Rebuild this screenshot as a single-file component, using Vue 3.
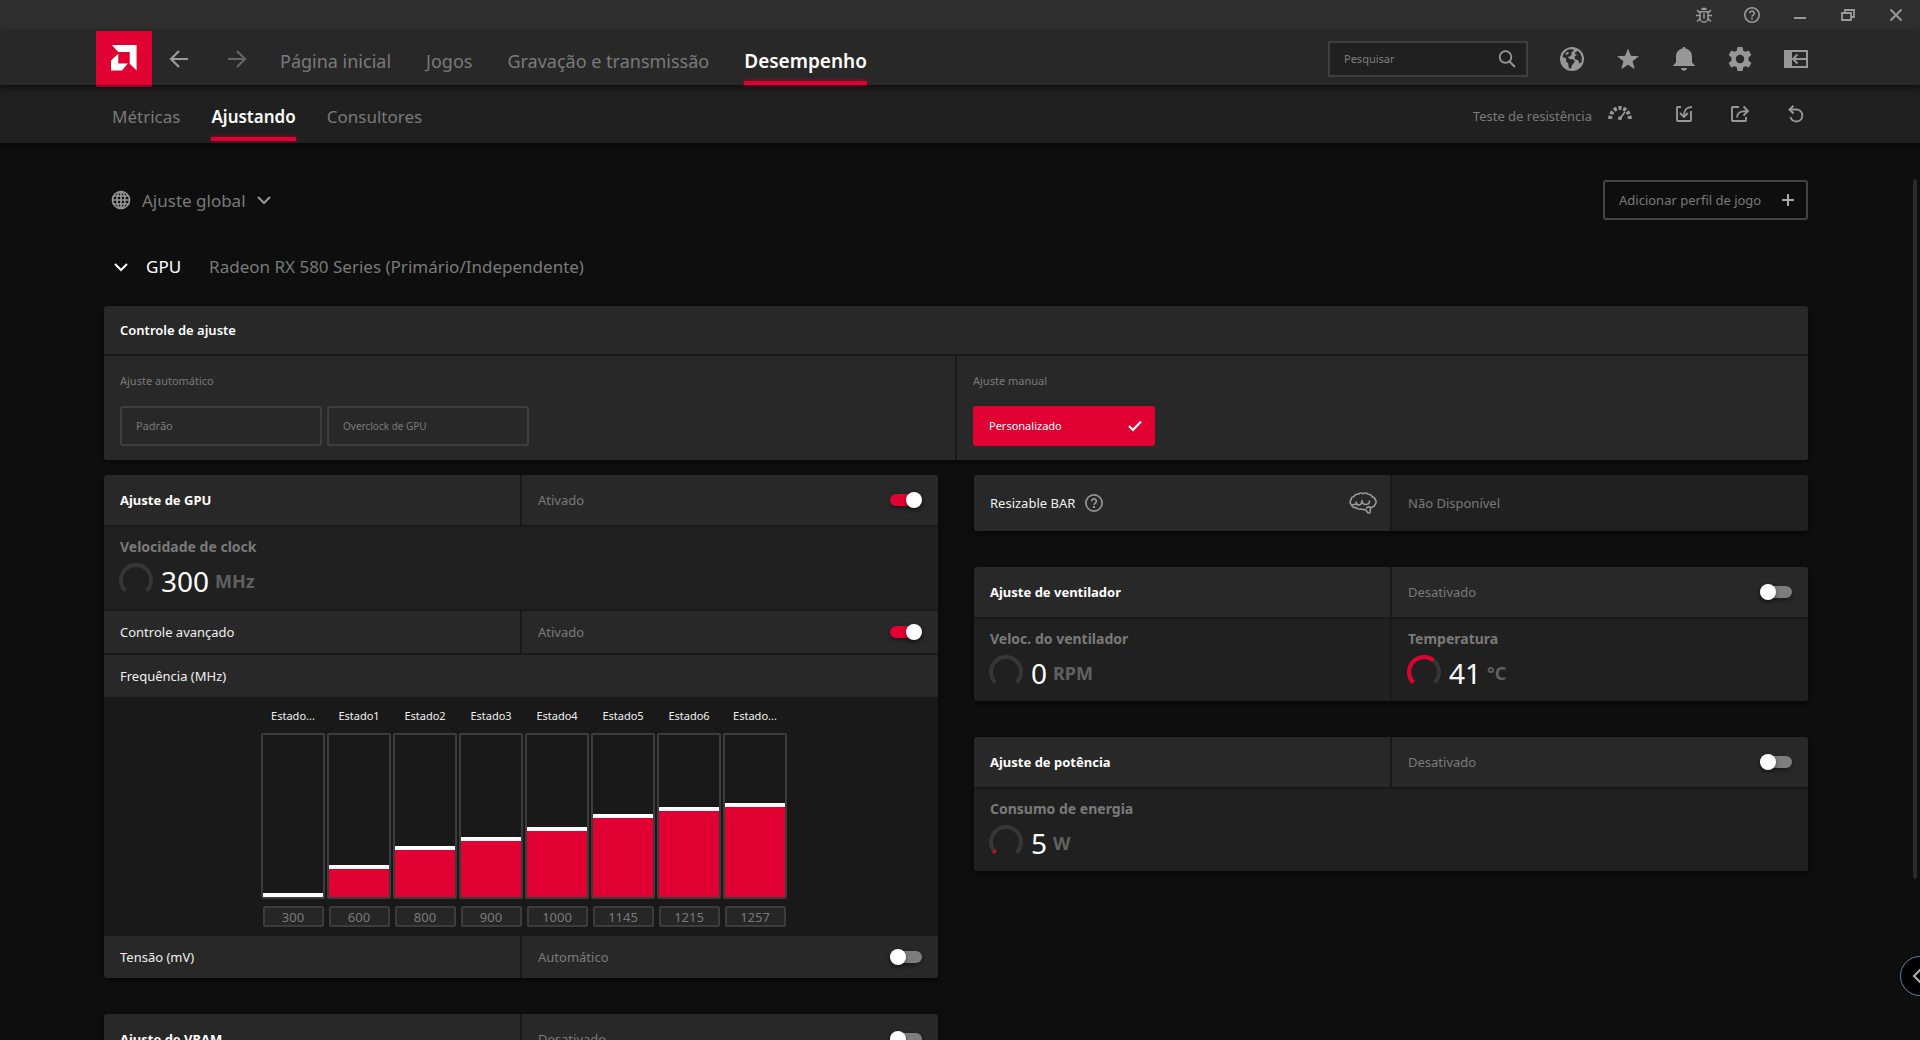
<script setup>
import { ref } from 'vue'

const mainTabs = ['Página inicial', 'Jogos', 'Gravação e transmissão', 'Desempenho']
const subTabs = ['Métricas', 'Ajustando', 'Consultores']
const activeMain = ref('Desempenho')
const activeSub = ref('Ajustando')

const minClock = 300
const maxClock = 1980
const states = ref([
  { label: 'Estado...', value: 300 },
  { label: 'Estado1', value: 600 },
  { label: 'Estado2', value: 800 },
  { label: 'Estado3', value: 900 },
  { label: 'Estado4', value: 1000 },
  { label: 'Estado5', value: 1145 },
  { label: 'Estado6', value: 1215 },
  { label: 'Estado...', value: 1257 }
])
const ratio = (v) => (v - minClock) / (maxClock - minClock)

const gpuOn = ref(true)
const advancedOn = ref(true)
const voltageOn = ref(false)
const vramOn = ref(false)
const fanOn = ref(false)
const powerOn = ref(false)
</script>

<template>
  <div class="app">
    <div class="titlebar">
      <button class="win-btn" aria-label="Relatar erro">
        <svg width="16" height="16" viewBox="0 0 16 16" fill="none" stroke="currentColor" stroke-width="1.6">
          <path d="M5 3a3 2.6 0 0 1 6 0z" fill="currentColor" stroke="none" />
          <path d="M4 4.8h8v6.4a4 4 0 0 1-8 0zM8 6.500v5M4 8.500H0M12 8.500h4M4 5.800L1 3.200M12 5.800l3-2.600M4.200 11.500L1 14.500M11.800 11.500L15 14.500" />
        </svg>
      </button>
      <button class="win-btn" aria-label="Ajuda">
        <svg width="16" height="16" viewBox="0 0 16 16" fill="none" stroke="currentColor" stroke-width="1.600">
          <circle cx="8" cy="8" r="7.200" />
          <path d="M5.800 6.300a2.200 2.200 0 1 1 3.400 1.800C8.300 8.700 8 9 8 9.800" />
          <path d="M8 10.800v1.800" stroke-width="1.800" />
        </svg>
      </button>
      <button class="win-btn" aria-label="Minimizar">
        <svg width="16" height="16" viewBox="0 0 16 16"><path d="M2 10h12v2H2z" fill="currentColor" /></svg>
      </button>
      <button class="win-btn" aria-label="Restaurar">
        <svg width="16" height="16" viewBox="0 0 16 16" fill="none" stroke="currentColor" stroke-width="1.800">
          <path d="M2 6h9v7H2zM5 6V3h9v7h-3" />
        </svg>
      </button>
      <button class="win-btn" aria-label="Fechar">
        <svg width="16" height="16" viewBox="0 0 16 16" fill="none" stroke="currentColor" stroke-width="1.800"><path d="M2.500 2.500l11 11M13.500 2.500l-11 11" /></svg>
      </button>
    </div>

    <header class="header">
      <div class="logo">
        <svg width="26" height="26" viewBox="0 0 25 25" fill="#fff">
          <path d="M.7 0H24.600V24.600L18 18V6.700H7z" />
          <path d="M7 8.500V17.700H16.200L10.500 24.600H0V15z" />
        </svg>
      </div>
      <div class="history">
        <button class="nav-arrow" aria-label="Voltar">
          <svg width="20" height="20" viewBox="0 0 20 20" fill="none" stroke="currentColor" stroke-width="2.200"><path d="M19 10H2.500M10 2L2 10l8 8" /></svg>
        </button>
        <button class="nav-arrow dim" aria-label="Avançar">
          <svg width="20" height="20" viewBox="0 0 20 20" fill="none" stroke="currentColor" stroke-width="2.200"><path d="M1 10h16.500M10 2l8 8-8 8" /></svg>
        </button>
      </div>
      <nav class="tabs main-tabs">
        <a v-for="t in mainTabs" :key="t" href="#" :class="{ active: t === activeMain }" @click.prevent="activeMain = t">{{ t }}</a>
      </nav>
      <div class="search">
        <input type="text" placeholder="Pesquisar" aria-label="Pesquisar" />
        <svg width="18" height="18" viewBox="0 0 18 18" fill="none" stroke="currentColor" stroke-width="1.800"><circle cx="7.500" cy="7" r="5.800" /><path d="M11.500 11.500L17 17" /></svg>
      </div>
      <div class="icons">
        <button class="icon-btn" aria-label="Navegador">
          <svg width="24" height="24" viewBox="0 0 24 24">
            <circle cx="12" cy="12" r="12" fill="currentColor" />
            <path d="M4 6l4-3.500 4.500-.3 1.300 1.600-2.800 2 .8 1.700-2.300 2.200H7.800l1.500 2.300 3.700.3 2 2.200-2.600 3-1.600 4.300-2-.8-.6-4.400-2.200-2.200.3-2.800L3 10.200 2.600 9z" fill="#282828" />
            <path d="M15 5.500l3-1.700 2.600 3.300 1.300 3.700-.3 4.400-2.200 1.300-1.400-3.400-2.800-.7-.7-3 2.800-1.700-2.300-.4z" fill="#282828" />
            <path d="M5.500 6.300l2.200-1.200 1.500.8-2 1.700-1.400.4z" fill="currentColor" />
          </svg>
        </button>
        <button class="icon-btn" aria-label="Favoritos">
          <svg width="24" height="24" viewBox="0 0 24 24" fill="currentColor"><path d="M12 1.500l2.800 7.300 8.200.5-6.400 4.900 2.200 8L12 17.800l-6.800 4.400 2.200-8L1 9.300l8.200-.5z" /></svg>
        </button>
        <button class="icon-btn" aria-label="Notificações">
          <svg width="24" height="24" viewBox="0 0 24 24" fill="currentColor"><path d="M12 0c1 0 1.500.6 1.600 1.600C17.500 2.600 20 5.500 20 9.500v6l3.500 3.500H.5L4 15.500v-6c0-4 2.500-6.900 6.400-7.900C10.500.6 11 0 12 0zM9 21h6c-.4 1.800-1.500 2.700-3 2.700S9.400 22.800 9 21z" /></svg>
        </button>
        <button class="icon-btn" aria-label="Configurações">
          <svg width="24" height="24" viewBox="0 0 24 24" fill="currentColor" fill-rule="evenodd"><path d="M9.500 0h5l.8 3.700 1.900 1.100 3.600-1.200 2.500 4.300-2.800 2.500v3.200l2.800 2.500-2.500 4.300-3.600-1.200-1.900 1.100-.8 3.700h-5l-.8-3.700-1.900-1.100-3.600 1.200L.7 16.100l2.800-2.500v-3.200L.7 7.900l2.500-4.300 3.600 1.200 1.900-1.100zM12 7.800a4.200 4.200 0 1 0 0 8.400 4.200 4.200 0 0 0 0-8.400z" /></svg>
        </button>
        <button class="icon-btn" aria-label="Recolher painel">
          <svg width="24" height="24" viewBox="0 0 24 24"><path d="M1 4h22v16H1z" fill="none" stroke="currentColor" stroke-width="2" /><path d="M0 3h8v18H0z" fill="currentColor" /><path d="M22 12H9.500M13.500 7.500L9 12l4.500 4.500" fill="none" stroke="currentColor" stroke-width="2" /></svg>
        </button>
      </div>
    </header>

    <div class="subnav">
      <nav class="tabs sub-tabs">
        <a v-for="t in subTabs" :key="t" href="#" :class="{ active: t === activeSub }" @click.prevent="activeSub = t">{{ t }}</a>
      </nav>
      <button class="stress">
        <span>Teste de resistência</span>
        <svg width="24" height="16" viewBox="0 0 24 16" fill="none" stroke="currentColor">
          <path d="M2.200 14A9.800 11 0 0 1 21.800 14" pathLength="306" stroke-width="4" stroke-dasharray="30 16" />
          <path d="M12 13.500l5-6.500" stroke-width="1.800" /><circle cx="12" cy="13.200" r="2" fill="currentColor" stroke="none" />
        </svg>
      </button>
      <div class="icons sub-icons">
        <button class="icon-btn" aria-label="Importar">
          <svg width="18" height="18" viewBox="0 0 18 18" fill="none" stroke="currentColor" stroke-width="1.900"><path d="M6 2H2.800Q2 2 2 2.800V15.200Q2 16 2.800 16H15.200Q16 16 16 15.200V6M17 2C12 2 9 4 9 11.500M5 8l4 4 4-4" /></svg>
        </button>
        <button class="icon-btn" aria-label="Exportar">
          <svg width="20" height="18" viewBox="0 0 20 18" fill="none" stroke="currentColor" stroke-width="1.900"><path d="M9 2H2.800Q2 2 2 2.800V15.200Q2 16 2.800 16H15.200Q16 16 16 15.200V12M7 12.500C7 8 9.500 6 17.500 6M13.500 1.500L18 6l-4.500 4.500" /></svg>
        </button>
        <button class="icon-btn" aria-label="Redefinir">
          <svg width="18" height="18" viewBox="0 0 18 18" fill="none" stroke="currentColor" stroke-width="1.900"><path d="M2.500 4.500H9.500A6 6 0 1 1 3.500 12M6.500.8L2.500 4.500l4 4" /></svg>
        </button>
      </div>
    </div>

    <main class="main">
      <div class="content">
        <div class="profile-row">
          <button class="profile">
            <svg width="20" height="20" viewBox="0 0 20 20" fill="none" stroke="currentColor" stroke-width="1.700"><circle cx="10" cy="10" r="8.500" /><ellipse cx="10" cy="10" rx="4" ry="8.500" /><path d="M10 1.500v17M1.500 10h17M2.600 6h14.800M2.600 14h14.800" /></svg>
            <span>Ajuste global</span>
            <svg width="14" height="14" viewBox="0 0 14 14" fill="none" stroke="currentColor" stroke-width="2"><path d="M1 4l6 6 6-6" /></svg>
          </button>
          <button class="add-profile">
            Adicionar perfil de jogo
            <svg width="12" height="12" viewBox="0 0 12 12" fill="none" stroke="currentColor" stroke-width="2"><path d="M6 0v12M0 6h12" /></svg>
          </button>
        </div>

        <button class="gpu-row">
          <svg width="14" height="14" viewBox="0 0 14 14" fill="none" stroke="#fff" stroke-width="2"><path d="M1 4l6 6 6-6" /></svg>
          <span class="gpu">GPU</span>
          <span>Radeon RX 580 Series (Primário/Independente)</span>
        </button>

        <section class="card">
          <h2 class="cell control-title">Controle de ajuste</h2>
          <div class="split">
            <div class="cell control-cell">
              <h3>Ajuste automático</h3>
              <div class="options">
                <button class="option">Padrão</button>
                <button class="option small">Overclock de GPU</button>
              </div>
            </div>
            <div class="cell control-cell">
              <h3>Ajuste manual</h3>
              <div class="options">
                <button class="option selected">
                  Personalizado
                  <svg width="14" height="12" viewBox="0 0 14 12" fill="none" stroke="#fff" stroke-width="2.200"><path d="M1 6l4 4 8-8.500" /></svg>
                </button>
              </div>
            </div>
          </div>
        </section>

        <div class="columns">
          <div class="column">
            <section class="card">
              <div class="split head">
                <h2 class="cell">Ajuste de GPU</h2>
                <label class="cell state">Ativado<input v-model="gpuOn" type="checkbox" class="toggle" /></label>
              </div>
              <div class="cell metric">
                <h3>Velocidade de clock</h3>
                <div class="reading">
                  <svg width="34" height="30" viewBox="0 0 34 30" fill="none" stroke-width="4"><path class="track" d="M6.400 27.600A15 15 0 1 1 27.600 27.600" /></svg>
                  <span class="value">300</span><span class="unit">MHz</span>
                </div>
              </div>
              <div class="split row">
                <span class="cell">Controle avançado</span>
                <label class="cell state">Ativado<input v-model="advancedOn" type="checkbox" class="toggle" /></label>
              </div>
              <div class="cell row">Frequência (MHz)</div>
              <div class="chart">
                <div v-for="(s, i) in states" :key="i" class="bar">
                  <label :for="'clock' + i">{{ s.label }}</label>
                  <input
                    :id="'clock' + i"
                    v-model.number="s.value"
                    class="slider"
                    type="range"
                    :min="minClock"
                    :max="maxClock"
                    :style="{ '--ratio': ratio(s.value) }"
                  />
                  <input v-model.number="s.value" class="clock" type="text" :aria-label="s.label + ' MHz'" />
                </div>
              </div>
              <div class="split row tension">
                <span class="cell">Tensão (mV)</span>
                <label class="cell state">Automático<input v-model="voltageOn" type="checkbox" class="toggle" /></label>
              </div>
            </section>

            <section class="card">
              <div class="split head">
                <h2 class="cell">Ajuste de VRAM</h2>
                <label class="cell state">Desativado<input v-model="vramOn" type="checkbox" class="toggle" /></label>
              </div>
            </section>
          </div>

          <div class="column">
            <section class="card">
              <div class="split rebar">
                <div class="cell rebar-name">
                  Resizable BAR
                  <svg width="18" height="18" viewBox="0 0 18 18" fill="none" stroke="currentColor" stroke-width="1.700">
                    <circle cx="9" cy="9" r="8.100" />
                    <path d="M6.700 7.200a2.300 2.300 0 1 1 3.500 1.900C9.300 9.700 9 10 9 11" /><path d="M9 12v1.900" stroke-width="2" />
                  </svg>
                  <svg class="brain" width="28" height="22" viewBox="0 0 28 22" fill="none" stroke="currentColor" stroke-width="1.600" stroke-linejoin="round">
                    <path d="M9.500 2Q12 .2 14 1.700Q17 .2 19 2.200Q22 2 23 4.500Q26 5.500 26.500 8Q28 10.500 26 12.800Q24.500 15.500 21.500 15.500L21 21H19L16.500 17.500Q14 18 12.500 17Q9 18 7 15.500Q3.500 16 2.500 13Q0 10.500 2 8Q2 5 5 4.500Q6 2 9.500 2z" />
                    <path d="M3 13Q6 11.500 8.500 12.800Q13 13.500 13 8.500Q13.500 12.800 17 12.500Q20.500 12.500 20.500 8.500M8.500 12.500Q7 11.500 7 9.500M17.500 16.500Q18 14.500 21.500 15" />
                  </svg>
                </div>
                <div class="cell state">Não Disponível</div>
              </div>
            </section>

            <section class="card">
              <div class="split head">
                <h2 class="cell">Ajuste de ventilador</h2>
                <label class="cell state">Desativado<input v-model="fanOn" type="checkbox" class="toggle" /></label>
              </div>
              <div class="split">
                <div class="cell metric">
                  <h3>Veloc. do ventilador</h3>
                  <div class="reading">
                    <svg width="34" height="30" viewBox="0 0 34 30" fill="none" stroke-width="4"><path class="track" d="M6.400 27.600A15 15 0 1 1 27.600 27.600" /></svg>
                    <span class="value">0</span><span class="unit">RPM</span>
                  </div>
                </div>
                <div class="cell metric">
                  <h3>Temperatura</h3>
                  <div class="reading">
                    <svg width="34" height="30" viewBox="0 0 34 30" fill="none" stroke-width="4">
                      <path class="track" d="M6.400 27.600A15 15 0 1 1 27.600 27.600" />
                      <path class="level" d="M6.400 27.600A15 15 0 0 1 26.500 5.400" />
                    </svg>
                    <span class="value">41</span><span class="unit">°C</span>
                  </div>
                </div>
              </div>
            </section>

            <section class="card">
              <div class="split head">
                <h2 class="cell">Ajuste de potência</h2>
                <label class="cell state">Desativado<input v-model="powerOn" type="checkbox" class="toggle" /></label>
              </div>
              <div class="cell metric">
                <h3>Consumo de energia</h3>
                <div class="reading">
                  <svg width="34" height="30" viewBox="0 0 34 30" fill="none" stroke-width="4">
                    <path class="track" d="M6.400 27.600A15 15 0 1 1 27.600 27.600" />
                    <path class="level" d="M6.400 27.600A15 15 0 0 1 4.700 25.600" />
                  </svg>
                  <span class="value">5</span><span class="unit">W</span>
                </div>
              </div>
            </section>
          </div>
        </div>
      </div>
      <div class="scroll-thumb"></div>
    </main>

    <button class="drawer" aria-label="Abrir painel lateral">
      <svg width="12" height="16" viewBox="0 0 12 16" fill="none" stroke="#b0b0b0" stroke-width="2"><path d="M9 1L2 8l7 7" /></svg>
    </button>
  </div>
</template>

<style>
body {
  margin: 0;
  background: #0e0e0e;
}
</style>

<style scoped>
* {
  box-sizing: border-box;
}

.app {
  position: relative;
  display: flex;
  flex-direction: column;
  height: 100vh;
  overflow: hidden;
  background: #0e0e0e;
  color: #7a7a7a;
  font-family: "Noto Sans", "Open Sans", sans-serif;
  font-size: 13px;
  line-height: 18px;
}

button {
  padding: 0;
  border: 0;
  background: none;
  color: inherit;
  font: inherit;
}

h2,
h3 {
  margin: 0;
  font-size: 13px;
}

svg {
  display: block;
  flex: none;
}

/* Window chrome */
.titlebar {
  display: flex;
  justify-content: flex-end;
  flex: none;
  height: 31px;
  padding-bottom: 2px;
  background: #2f2f2f;
  color: #9a9a9a;
}

.win-btn {
  display: flex;
  align-items: center;
  justify-content: center;
  width: 48px;
}

.header {
  position: relative;
  z-index: 2;
  display: flex;
  align-items: center;
  flex: none;
  height: 54px;
  padding: 2px 112px 0 96px;
  background: #282828;
  box-shadow: 0 2px 6px rgba(0, 0, 0, 0.7);
}

.logo {
  display: flex;
  align-items: center;
  justify-content: center;
  align-self: flex-start;
  width: 56px;
  height: 56px;
  margin-top: -2px;
  border-bottom: 2px solid #8a0622;
  background: #e00031;
}

.history {
  display: flex;
  gap: 34px;
  margin-left: 15px;
}

.nav-arrow {
  display: flex;
  align-items: center;
  justify-content: center;
  width: 24px;
  height: 24px;
  color: #9a9a9a;
}

.nav-arrow.dim {
  color: #646464;
}

.tabs {
  display: flex;
  flex: 1;
}

/* Each tab keeps a 4px strip under its text for the marker */
.tabs a {
  display: grid;
  grid-template-rows: 1fr 4px;
  align-items: center;
  color: #7a7a7a;
  text-decoration: none;
  white-space: nowrap;
}

.tabs a::after {
  content: "";
  height: 4px;
}

.tabs a.active {
  color: #fff;
  font-weight: 600;
}

.tabs a.active::after {
  background: #e00031;
  box-shadow: 0 0 4px rgba(224, 0, 49, 0.6);
}

.main-tabs {
  align-self: stretch;
  gap: 35px;
  margin-left: 31px;
  font-size: 18px;
}

.main-tabs a {
  padding-top: 8px;
}

.main-tabs a.active {
  font-size: 19px;
}

.search {
  display: flex;
  align-items: center;
  width: 200px;
  height: 36px;
  padding: 0 10px 0 14px;
  border: 2px solid #3e3e3e;
  background: #202020;
  color: #9a9a9a;
}

.search input {
  flex: 1;
  min-width: 0;
  padding: 0;
  border: 0;
  outline: 0;
  background: none;
  color: #fff;
  font: inherit;
  font-size: 11px;
}

.search input::placeholder {
  color: #7f7f7f;
  opacity: 1;
}

.icons {
  display: flex;
  gap: 32px;
  margin-left: 32px;
  color: #979797;
}

.icon-btn {
  display: flex;
  align-items: center;
  justify-content: center;
  width: 24px;
  height: 24px;
}

.subnav {
  display: flex;
  align-items: center;
  flex: none;
  height: 58px;
  padding: 0 112px;
  background: #202020;
  box-shadow: 0 1px 4px rgba(0, 0, 0, 0.8);
}

.sub-tabs {
  gap: 31px;
  height: 56px;
  align-self: flex-start;
  font-size: 17px;
}

.sub-tabs a {
  padding-top: 12px;
}

.stress {
  display: flex;
  align-items: center;
  gap: 16px;
}

.stress span {
  padding-top: 4px;
}

.stress svg {
  margin-bottom: 2px;
  color: #979797;
}

.sub-icons {
  margin-left: 40px;
}

/* Page body */
.main {
  display: flex;
  flex: 1;
  min-height: 0;
}

.content {
  flex: 1;
  min-width: 0;
  padding: 37px 105px 0 104px;
}

.scroll-thumb {
  width: 4px;
  height: 78%;
  margin: 36px 3px 0 0;
  border-radius: 2px;
  background: #2a2a2a;
}

.profile-row {
  display: flex;
  align-items: center;
  justify-content: space-between;
  height: 40px;
}

.profile {
  display: flex;
  align-items: center;
  gap: 11px;
  padding-left: 7px;
  font-size: 17px;
}

.profile span {
  padding-top: 2px;
}

.profile svg {
  color: #979797;
}

.add-profile {
  display: flex;
  align-items: center;
  justify-content: space-between;
  width: 205px;
  height: 40px;
  padding: 0 12px 0 14px;
  border: 2px solid #444;
  border-radius: 3px;
}

.add-profile svg {
  color: #aaa;
}

.gpu-row {
  display: flex;
  align-items: center;
  gap: 28px;
  height: 24px;
  margin: 35px 0 27px;
  padding-left: 10px;
  font-size: 17px;
}

.gpu {
  margin-left: -10px;
  color: #fff;
}

.card {
  display: flex;
  flex-direction: column;
  gap: 2px;
  overflow: hidden;
  border-radius: 3px;
  background: #191919;
  box-shadow: 0 2px 5px rgba(0, 0, 0, 0.6);
}

.split {
  display: grid;
  grid-template-columns: 1fr 1fr;
  gap: 2px;
}

.cell {
  display: flex;
  align-items: center;
  padding: 0 16px;
  background: #282828;
}

.control-title {
  height: 48px;
  color: #fff;
  font-weight: 600;
}

.control-cell {
  flex-direction: column;
  align-items: flex-start;
  height: 104px;
  padding-top: 16px;
}

.control-cell h3 {
  font-size: 11px;
  font-weight: 400;
}

.options {
  display: flex;
  gap: 5px;
  margin-top: 16px;
}

.option {
  display: flex;
  align-items: center;
  justify-content: space-between;
  width: 202px;
  height: 40px;
  padding: 0 11px 0 14px;
  border: 2px solid #3e3e3e;
  border-radius: 3px;
  font-size: 11px;
}

.option.small {
  font-size: 10px;
}

.option.selected {
  width: 182px;
  border-color: #e00031;
  background: #e00031;
  color: #fff;
}

.columns {
  display: grid;
  grid-template-columns: 1fr 1fr;
  align-items: start;
  gap: 36px;
  margin-top: 15px;
}

.column {
  display: flex;
  flex-direction: column;
  gap: 36px;
}

.head {
  height: 50px;
}

.head h2 {
  color: #fff;
  font-weight: 700;
}

.row {
  height: 42px;
  color: #f0f0f0;
}

.state {
  justify-content: space-between;
  color: #7a7a7a;
}

.metric {
  flex-direction: column;
  align-items: flex-start;
  height: 82px;
  padding-top: 11px;
  background: #202020;
}

.metric h3 {
  font-size: 14px;
}

.reading {
  display: flex;
  align-items: center;
  height: 40px;
  margin: 5px 0 0 -1px;
}

.reading svg {
  margin-bottom: 6px;
}

.track {
  stroke: #363636;
}

.level {
  stroke: #e00031;
}

.value {
  margin-left: 8px;
  color: #fff;
  font-size: 28px;
  line-height: 40px;
}

.unit {
  margin-left: 6px;
  color: #606060;
  font-size: 18px;
  font-weight: 700;
}

.chart {
  display: flex;
  justify-content: center;
  gap: 2px;
  height: 239px;
  margin-top: -2px;
  padding: 10px 0 0 6px;
}

.bar {
  display: flex;
  flex-direction: column;
  align-items: center;
  width: 64px;
}

.bar label {
  color: #f0f0f0;
  font-size: 11px;
}

.slider {
  appearance: none;
  writing-mode: vertical-lr;
  direction: rtl;
  width: 64px;
  height: 166px;
  margin: 8px 0 7px;
  border: 2px solid #3c3c3c;
  border-radius: 2px;
  background: linear-gradient(to top, #e00031 calc(2px + var(--ratio) * 158px), transparent 0) no-repeat padding-box;
}

.slider::-webkit-slider-thumb {
  appearance: none;
  width: 60px;
  height: 4px;
  border: 0;
  border-radius: 0;
  background: #fff;
}

.clock {
  width: 61px;
  height: 21px;
  padding: 0;
  border: 2px solid #3c3c3c;
  border-radius: 2px;
  background: #262626;
  color: #7a7a7a;
  font: inherit;
  line-height: 17px;
  text-align: center;
}

.tension {
  margin-top: -2px;
}

.toggle {
  appearance: none;
  display: flex;
  align-items: center;
  width: 32px;
  height: 12px;
  margin: 0;
  border-radius: 6px;
  background: #7d7d7d;
  box-shadow: 0 2px 4px rgba(0, 0, 0, 0.4);
}

.toggle::before {
  content: "";
  width: 16px;
  height: 16px;
  flex: none;
  border-radius: 50%;
  background: #fff;
  box-shadow: 0 2px 4px rgba(0, 0, 0, 0.4);
}

.toggle:checked {
  justify-content: flex-end;
  background: #e00031;
}

.rebar {
  height: 56px;
}

.rebar-name {
  gap: 10px;
  padding-right: 13px;
  color: #f0f0f0;
}

.rebar-name svg {
  color: #979797;
}

.rebar-name .brain {
  margin-left: auto;
}

.rebar .state {
  background: #202020;
}

.drawer {
  position: absolute;
  right: -20px;
  bottom: 44px;
  display: flex;
  align-items: center;
  width: 40px;
  height: 40px;
  padding-left: 11px;
  border: 1px solid #4d8ba3;
  border-radius: 50%;
  background: #000;
}
</style>
